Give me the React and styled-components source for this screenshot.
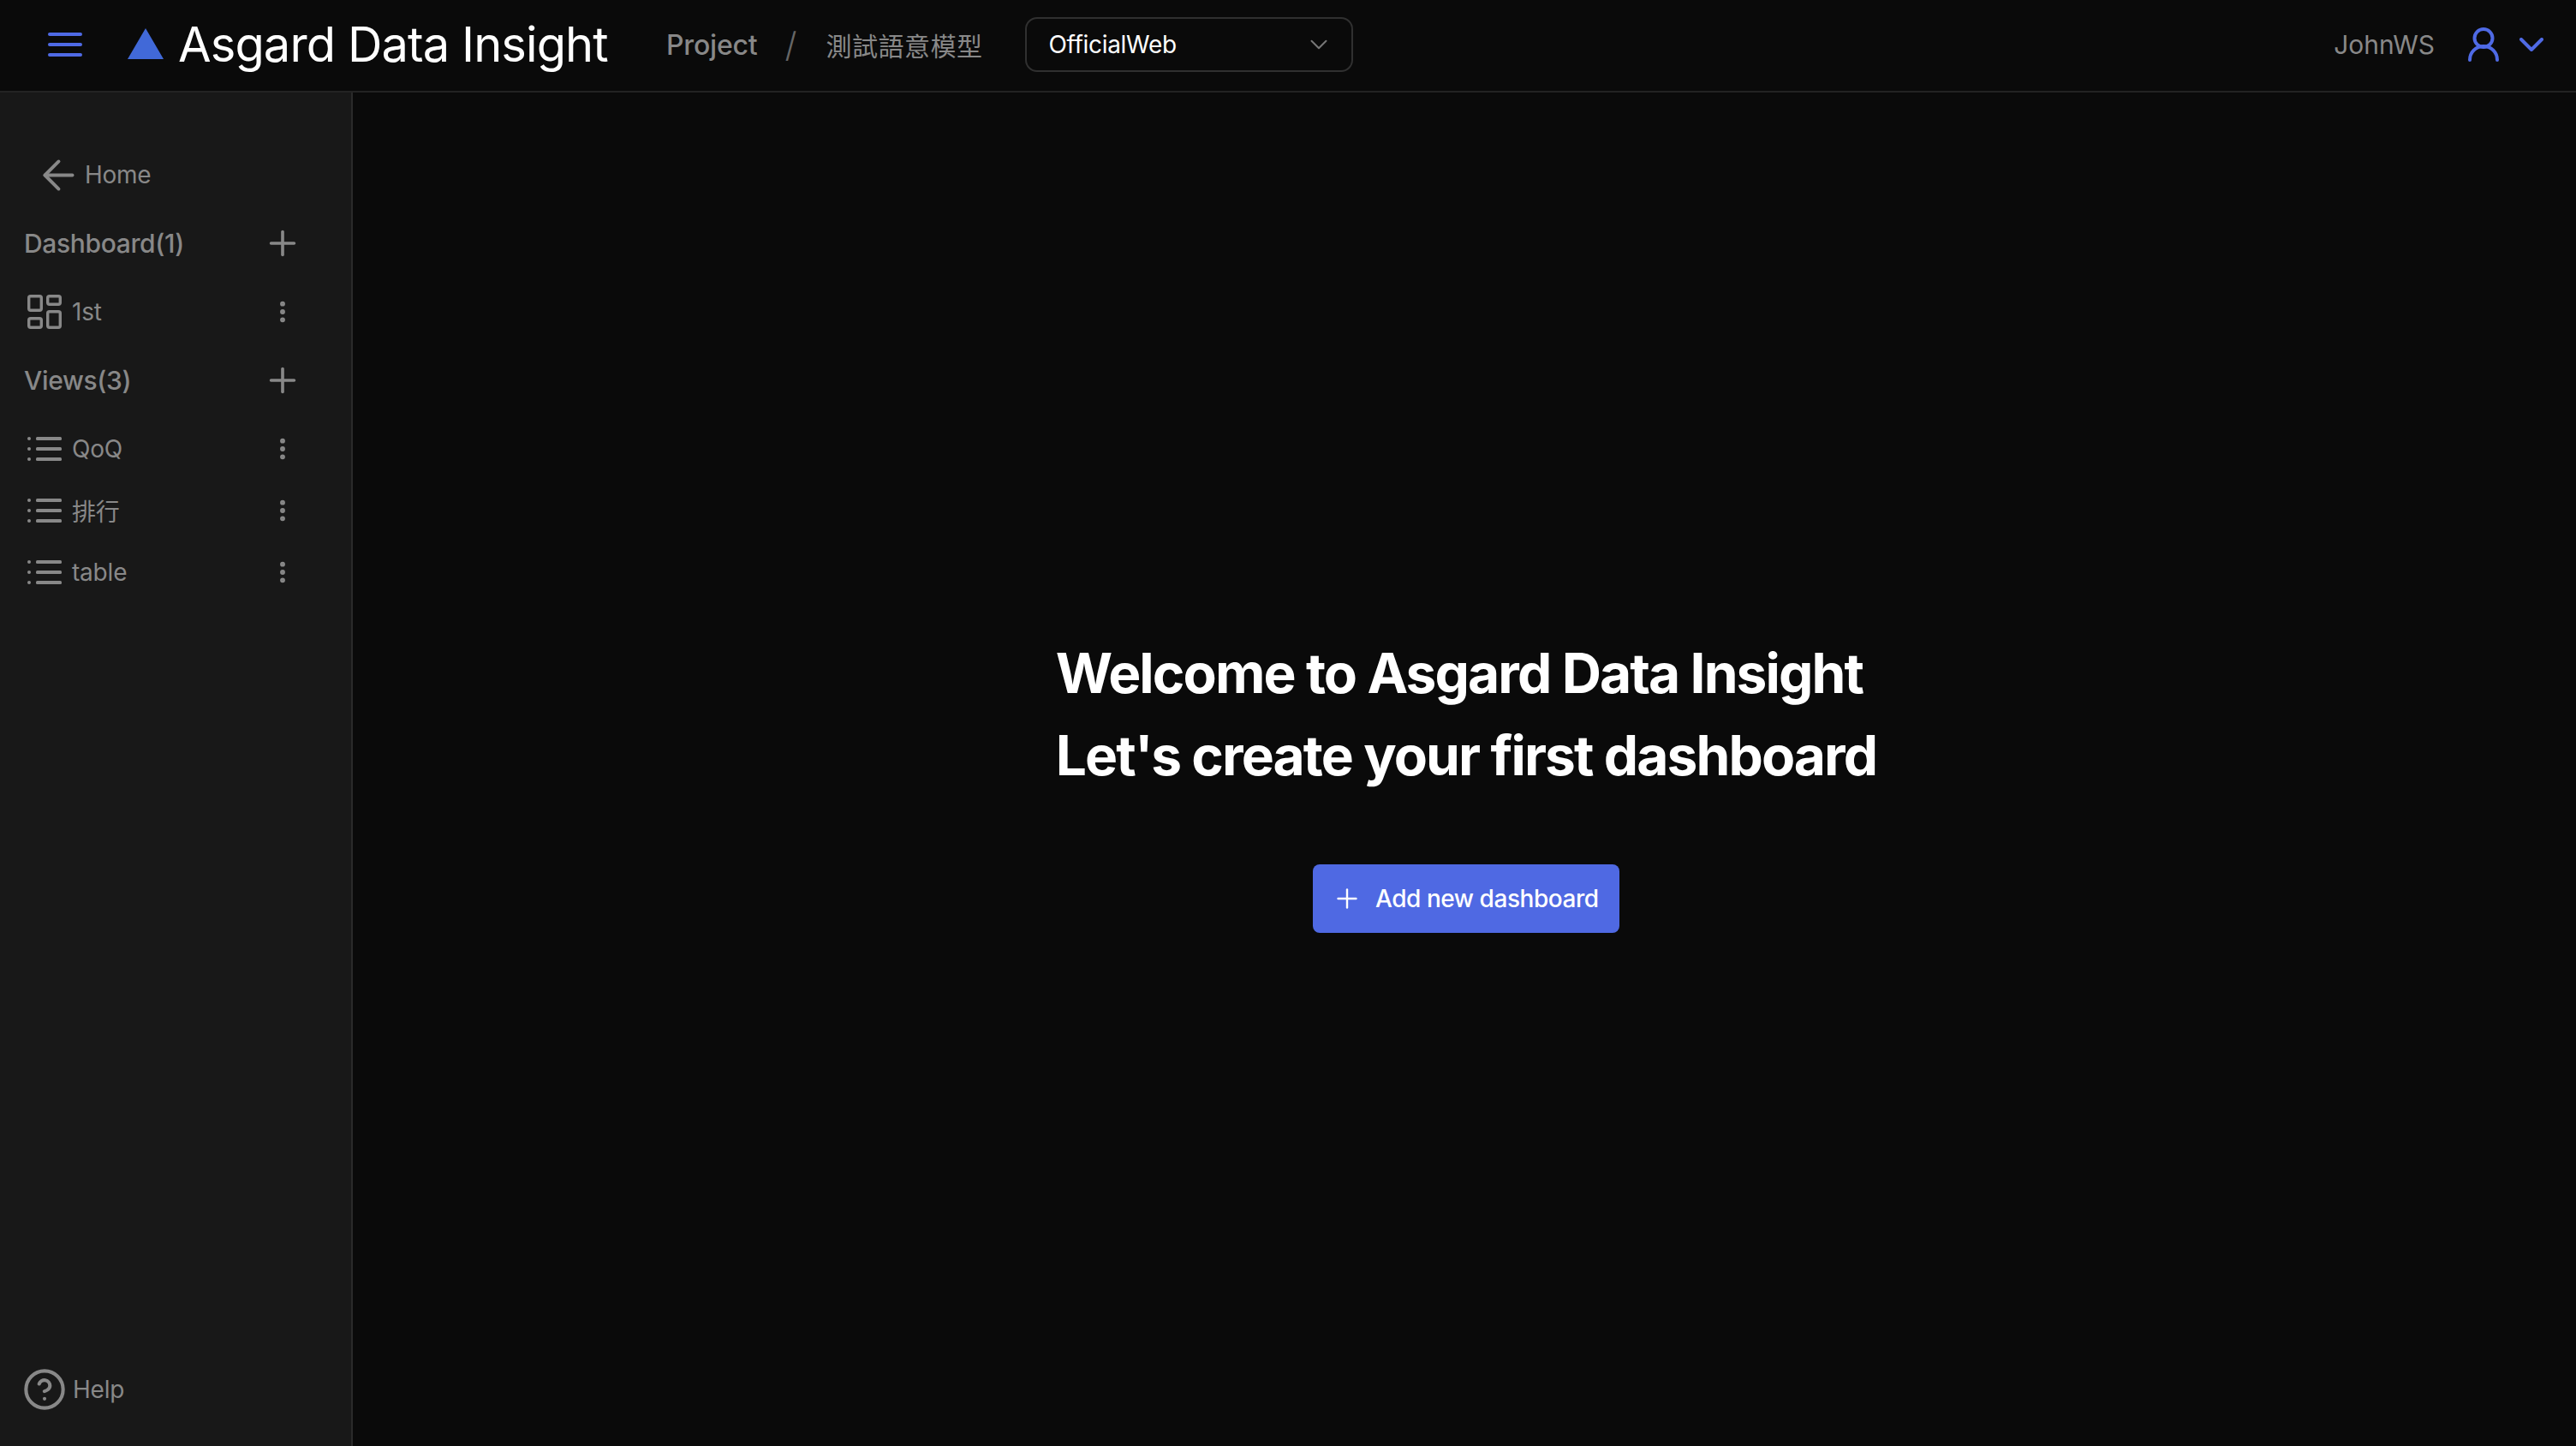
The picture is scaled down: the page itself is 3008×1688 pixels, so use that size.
import styled, { createGlobalStyle } from "styled-components";
import { ArrowLeft, ChevronDown, CircleHelp, EllipsisVertical, Plus } from "lucide-react";

const GlobalStyle = createGlobalStyle`
  html, body {
    margin: 0;
    background: #0a0a0a;
  }
  * {
    box-sizing: border-box;
  }
`;

const views = ["QoQ", "排行", "table"];

const MenuIcon = () => (
  <svg width="40" height="28" viewBox="0 0 40 28">
    <g fill="#4f6ae5">
      <rect x="0" y="0" width="40" height="4" rx="2" />
      <rect x="0" y="12" width="40" height="4" rx="2" />
      <rect x="0" y="24" width="40" height="4" rx="2" />
    </g>
  </svg>
);

const LogoIcon = () => (
  <svg width="42" height="36" viewBox="0 0 42 36">
    <path d="M21 0L42 36H0Z" fill="#4169d8" />
  </svg>
);

const UserIcon = () => (
  <svg width="36" height="40" viewBox="0 0 36 40" fill="none" stroke="#4f6ae5" strokeWidth="4" strokeLinecap="round">
    <circle cx="18" cy="12.5" r="10.5" />
    <path d="M2 38c0-9 7-16 16-16s16 7 16 16" />
  </svg>
);

const CaretIcon = () => (
  <svg width="28" height="16" viewBox="0 0 28 16" fill="none" stroke="#4f6ae5" strokeWidth="4" strokeLinecap="round" strokeLinejoin="round">
    <path d="M2 2l12 12L26 2" />
  </svg>
);

const DashboardIcon = () => (
  <svg width="40" height="40" viewBox="0 0 40 40" fill="none" stroke="#888" strokeWidth="3.4" strokeLinejoin="round">
    <rect x="1.7" y="1.7" width="14.6" height="16.6" rx="2" />
    <rect x="23.7" y="1.7" width="14.6" height="9.6" rx="2" />
    <rect x="1.7" y="27.7" width="14.6" height="10.6" rx="2" />
    <rect x="23.7" y="19.7" width="14.6" height="18.6" rx="2" />
  </svg>
);

const ListIcon = () => (
  <svg width="40" height="28" viewBox="0 0 40 28" fill="#888">
    <circle cx="2" cy="2" r="2" />
    <circle cx="2" cy="14" r="2" />
    <circle cx="2" cy="26" r="2" />
    <rect x="10" y="0" width="30" height="4" rx="1.5" />
    <rect x="10" y="12" width="30" height="4" rx="1.5" />
    <rect x="10" y="24" width="30" height="4" rx="1.5" />
  </svg>
);

const App = () => {
  return (
    <Page>
      <GlobalStyle />
      <Header>
        <MenuButton>
          <MenuIcon />
        </MenuButton>
        <Logo>
          <LogoIcon />
          <LogoText>Asgard Data Insight</LogoText>
        </Logo>
        <Crumb>Project</Crumb>
        <Slash>/</Slash>
        <CrumbCjk>測試語意模型</CrumbCjk>
        <Select>
          <span>OfficialWeb</span>
          <ChevronDown size={34} strokeWidth={1.4} color="#777" />
        </Select>
        <UserArea>
          <UserName>JohnWS</UserName>
          <UserIcon />
          <CaretIcon />
        </UserArea>
      </Header>
      <Body>
        <Sidebar>
          <HomeRow>
            <ArrowLeft size={55} strokeWidth={1.7} color="#888" />
            <span>Home</span>
          </HomeRow>
          <SectionRow>
            <span>Dashboard(1)</span>
            <Plus size={46} strokeWidth={1.9} color="#888" />
          </SectionRow>
          <ItemRow>
            <DashboardIcon />
            <ItemLabel>1st</ItemLabel>
            <EllipsisVertical size={32} strokeWidth={2.4} color="#888" />
          </ItemRow>
          <SectionRow>
            <span>Views(3)</span>
            <Plus size={46} strokeWidth={1.9} color="#888" />
          </SectionRow>
          {views.map((view) => (
            <ListRow key={view}>
              <ListIcon />
              <ItemLabel>{view}</ItemLabel>
              <EllipsisVertical size={32} strokeWidth={2.4} color="#888" />
            </ListRow>
          ))}
          <HelpRow>
            <CircleHelp size={52} strokeWidth={1.9} color="#888" />
            <ItemLabel>Help</ItemLabel>
          </HelpRow>
        </Sidebar>
        <Main>
          <Welcome>
            <div>Welcome to Asgard Data Insight</div>
            <div>Let's create your first dashboard</div>
          </Welcome>
          <AddButton>
            <Plus size={36} strokeWidth={1.6} color="#fff" />
            <span>Add new dashboard</span>
          </AddButton>
        </Main>
      </Body>
    </Page>
  );
};

const Page = styled.div`
  width: 3008px;
  height: 1688px;
  display: flex;
  flex-direction: column;
  overflow: hidden;
  background: #0a0a0a;
  font-family: Inter, "Noto Sans CJK TC", sans-serif;
`;
const Header = styled.header`
  display: flex;
  align-items: center;
  height: 108px;
  flex: none;
  padding: 0 38px 2px 56px;
  border-bottom: 2px solid #232323;
`;
const MenuButton = styled.div`
  display: flex;
  width: 40px;
  height: 28px;
`;
const Logo = styled.div`
  display: flex;
  align-items: center;
  gap: 17px;
  margin-left: 53px;
  svg {
    margin-top: -2px;
  }
`;
const LogoText = styled.div`
  width: 500px;
  font-size: 56px;
  font-weight: 400;
  letter-spacing: -0.9px;
  color: #fff;
  white-space: nowrap;
`;
const Crumb = styled.div`
  margin-left: 70px;
  font-size: 32px;
  font-weight: 500;
  letter-spacing: -0.2px;
  color: #888;
`;
const Slash = styled.div`
  margin-left: 32px;
  font-size: 40px;
  font-weight: 300;
  color: #666;
`;
const CrumbCjk = styled.div`
  margin-left: 34px;
  font-size: 30px;
  letter-spacing: 0.5px;
  color: #888;
`;
const Select = styled.div`
  display: flex;
  align-items: center;
  justify-content: space-between;
  width: 383px;
  height: 64px;
  margin-left: 50px;
  padding: 0 21px 0 25px;
  border: 2px solid #303030;
  border-radius: 14px;
  font-size: 28px;
  letter-spacing: -0.3px;
  color: #fff;
`;
const UserArea = styled.div`
  display: flex;
  align-items: center;
  margin-left: auto;
  svg:nth-of-type(2) {
    margin-left: 24px;
  }
`;
const UserName = styled.div`
  margin-right: 39px;
  font-size: 30px;
  color: #888;
`;
const Body = styled.div`
  display: flex;
  flex: 1;
  min-height: 0;
`;
const Sidebar = styled.aside`
  display: flex;
  flex-direction: column;
  width: 412px;
  flex: none;
  padding: 60px 0 30px;
  background: #181818;
  border-right: 2px solid #2a2a2a;
`;
const HomeRow = styled.div`
  display: flex;
  align-items: center;
  gap: 3px;
  height: 72px;
  margin-bottom: 4px;
  padding-left: 41px;
  font-size: 28px;
  letter-spacing: -0.3px;
  color: #888;
`;
const SectionRow = styled.div`
  display: flex;
  align-items: center;
  justify-content: space-between;
  height: 80px;
  margin-bottom: 4px;
  padding: 0 57px 0 28px;
  font-size: 30px;
  font-weight: 500;
  letter-spacing: -0.35px;
  color: #888;
`;
const ItemRow = styled.div`
  display: flex;
  align-items: center;
  height: 72px;
  margin-bottom: 4px;
  padding: 0 64px 0 32px;
`;
const ListRow = styled(ItemRow)`
  margin-bottom: 0;
`;
const ItemLabel = styled.div`
  flex: 1;
  margin-left: 12px;
  font-size: 28px;
  letter-spacing: -0.2px;
  color: #888;
`;
const HelpRow = styled.div`
  display: flex;
  align-items: center;
  height: 72px;
  margin-top: auto;
  padding-left: 26px;
  ${ItemLabel} {
    margin-left: 7px;
  }
`;
const Main = styled.main`
  display: flex;
  flex: 1;
  flex-direction: column;
  align-items: center;
  padding: 630px 0 0 4px;
`;
const Welcome = styled.div`
  font-size: 64px;
  font-weight: 700;
  line-height: 96px;
  letter-spacing: -1.9px;
  color: #fff;
  white-space: nowrap;
`;
const AddButton = styled.div`
  display: flex;
  align-items: center;
  gap: 15px;
  width: 358px;
  height: 80px;
  margin-top: 79px;
  padding-left: 22px;
  border-radius: 8px;
  background: #4f69e3;
  font-size: 28px;
  font-weight: 500;
  letter-spacing: -0.45px;
  color: #fff;
  white-space: nowrap;
`;

export default App;
